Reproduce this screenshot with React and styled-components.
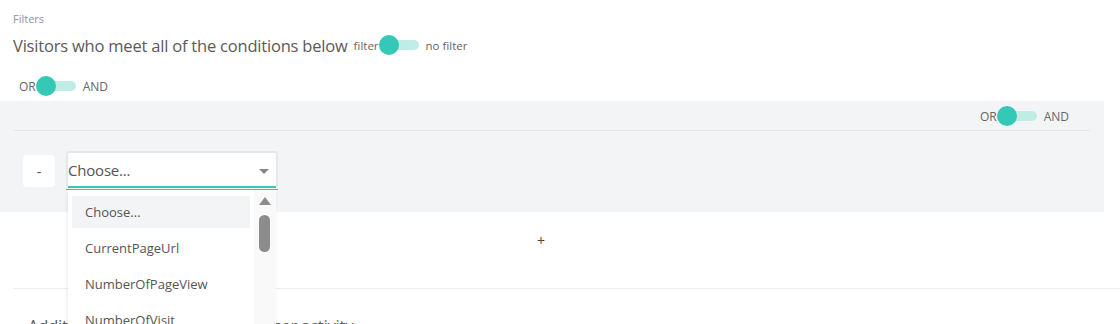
import React from "react";
import styled, { createGlobalStyle } from "styled-components";

const GlobalStyle = createGlobalStyle`
  html, body {
    margin: 0;
    padding: 0;
    background: #fff;
    font-family: "Open Sans", "Liberation Sans", sans-serif;
    color: #555;
    overflow: hidden;
  }
`;

const Page = styled.div`
  width: 1120px;
  height: 324px;
  overflow: hidden;
  position: relative;
`;

const Head = styled.div`
  padding: 12px 13px 0;
`;

const Caption = styled.div`
  font-size: 11px;
  color: #8a94aa;
  line-height: 14px;
`;

const TitleRow = styled.div`
  display: flex;
  align-items: center;
  margin-top: 6px;
  height: 26px;
`;

const Title = styled.h2`
  margin: 0;
  font-weight: 400;
  font-size: 16.5px;
  color: #5a5a5a;
  letter-spacing: -0.2px;
  margin-right: 6px;
`;

const ToggleWrap = styled.div`
  display: inline-flex;
  align-items: center;
  font-size: ${(p) => p.size || 12}px;
  color: #666;
`;

const Track = styled.span`
  position: relative;
  display: inline-block;
  width: 40px;
  height: 10px;
  border-radius: 5px;
  background: #bfede6;
  margin-right: 7px;
`;

const Knob = styled.span`
  position: absolute;
  left: 0;
  top: -5px;
  width: 20px;
  height: 20px;
  border-radius: 50%;
  background: #35c8b6;
`;

const Toggle = ({ left, right, size }) => (
  <ToggleWrap size={size}>
    <span>{left}</span>
    <Track>
      <Knob />
    </Track>
    <span>{right}</span>
  </ToggleWrap>
);

const LogicRow = styled.div`
  display: flex;
  justify-content: ${(p) => (p.end ? "flex-end" : "flex-start")};
  padding: ${(p) => p.pad};
  height: 20px;
  align-items: center;
`;

const Panel = styled.div`
  width: 1104px;
  height: 111px;
  background: #f3f4f6;
  margin-top: 5px;
  padding: 5px 14px 0 13px;
  box-sizing: border-box;
`;

const Divider = styled.div`
  height: 1px;
  background: #e4e6e9;
  margin-top: 4px;
`;

const ConditionRow = styled.div`
  display: flex;
  align-items: flex-start;
  gap: 11px;
  margin-top: 20px;
  padding-left: 10px;
`;

const MinusButton = styled.button`
  width: 32px;
  height: 32px;
  margin-top: 4px;
  border: none;
  border-radius: 4px;
  background: #fff;
  font-family: inherit;
  font-size: 14px;
  color: #555;
  padding: 0;
`;

const SelectBox = styled.div`
  position: relative;
  width: 212px;
  height: 36px;
  box-sizing: border-box;
  background: #fff;
  border: 2px solid #e6e7e9;
  border-bottom: none;
  border-radius: 3px 3px 0 0;
`;

const SelectValue = styled.div`
  font-size: 15px;
  color: #555;
  line-height: 34px;
  letter-spacing: -0.2px;
`;

const Caret = styled.span`
  position: absolute;
  right: 7px;
  top: 16px;
  width: 0;
  height: 0;
  border-left: 5px solid transparent;
  border-right: 5px solid transparent;
  border-top: 5px solid #888;
`;

const Underline = styled.div`
  position: absolute;
  left: 0;
  right: 0;
  bottom: -1px;
  height: 2px;
  background: #35c8b6;
  &::after {
    content: "";
    position: absolute;
    left: -2px;
    right: -2px;
    top: 3px;
    height: 1px;
    background: #e07a7a;
  }
`;

const Menu = styled.div`
  position: absolute;
  left: 0;
  top: 37px;
  width: 208px;
  height: 150px;
  background: #fff;
  box-shadow: -1px 2px 4px rgba(0, 0, 0, 0.08);
  display: flex;
  z-index: 10;
`;

const Options = styled.ul`
  list-style: none;
  margin: 0;
  padding: 6px 4px 0;
  flex: 1;
`;

const Option = styled.li`
  height: 32px;
  margin-bottom: 4px;
  padding-left: 13px;
  font-size: 13px;
  line-height: 32px;
  color: #555;
  background: ${(p) => (p.active ? "#f3f4f6" : "transparent")};
`;

const ScrollBar = styled.div`
  width: 22px;
  background: #f9f9f9;
  position: relative;
`;

const ScrollUp = styled.span`
  position: absolute;
  left: 5px;
  top: 7px;
  width: 0;
  height: 0;
  border-left: 6px solid transparent;
  border-right: 6px solid transparent;
  border-bottom: 8px solid #8c8c8c;
`;

const Thumb = styled.span`
  position: absolute;
  left: 5px;
  top: 25px;
  width: 11px;
  height: 37px;
  border-radius: 6px;
  background: #8c8c8c;
`;

const AddRow = styled.div`
  width: 1082px;
  display: flex;
  justify-content: center;
  padding-top: 19px;
  height: 60px;
  box-sizing: border-box;
`;

const PlusButton = styled.span`
  font-size: 14px;
  color: #444;
`;

const Footer = styled.div`
  margin-left: 13px;
  margin-top: 16px;
  border-top: 1px solid #eceef0;
  padding: 25px 0 0 15px;
`;

const FooterTitle = styled.div`
  font-size: 16.5px;
  color: #5a5a5a;
  letter-spacing: -0.2px;
`;

const options = ["Choose...", "CurrentPageUrl", "NumberOfPageView", "NumberOfVisit", "TimeOnPage"];

export default function App() {
  return (
    <Page>
      <GlobalStyle />
      <Head>
        <Caption>Filters</Caption>
        <TitleRow>
          <Title>Visitors who meet all of the conditions below</Title>
          <Toggle left="filter" right="no filter" size={11.5} />
        </TitleRow>
      </Head>
      <LogicRow pad="18px 0 0 19px">
        <Toggle left="OR" right="AND" size={12} />
      </LogicRow>
      <Panel>
        <LogicRow end pad="0 21px 0 0">
          <Toggle left="OR" right="AND" size={12} />
        </LogicRow>
        <Divider />
        <ConditionRow>
          <MinusButton>-</MinusButton>
          <SelectBox>
            <SelectValue>Choose...</SelectValue>
            <Caret />
            <Underline />
            <Menu>
              <Options>
                {options.map((o, i) => (
                  <Option key={o} active={i === 0}>
                    {o}
                  </Option>
                ))}
              </Options>
              <ScrollBar>
                <ScrollUp />
                <Thumb />
              </ScrollBar>
            </Menu>
          </SelectBox>
        </ConditionRow>
      </Panel>
      <AddRow>
        <PlusButton>+</PlusButton>
      </AddRow>
      <Footer>
        <FooterTitle>Additional conditions based on user activity</FooterTitle>
      </Footer>
    </Page>
  );
}
